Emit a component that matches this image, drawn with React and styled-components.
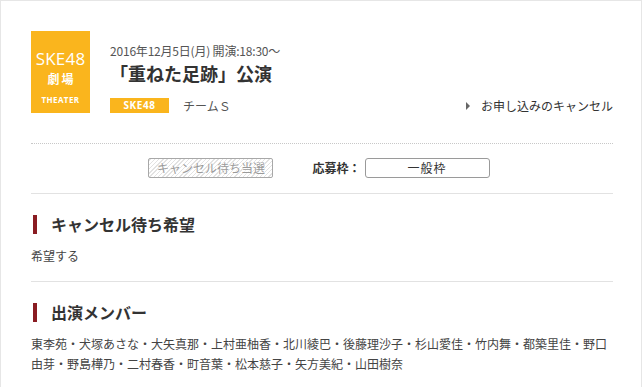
import styled, { createGlobalStyle } from 'styled-components';

const GlobalStyle = createGlobalStyle`
  html, body {
    margin: 0;
    padding: 0;
    background: #fff;
  }
  body {
    font-family: "Noto Sans CJK JP", "Noto Sans", sans-serif;
    color: #333;
  }
`;

const Card = styled.div`
  box-sizing: border-box;
  width: 642px;
  min-height: 387px;
  border: 1px solid #e6e6e6;
  border-bottom: none;
  padding: 0 28px 0 30px;
`;

const Header = styled.div`
  display: flex;
  align-items: flex-start;
  padding: 30px 0 30px;
  border-bottom: 1px dotted #c8c8c8;
`;

const Logo = styled.div`
  flex: 0 0 59px;
  height: 82px;
  background: #fab51d;
  color: #fff;
  display: flex;
  flex-direction: column;
  align-items: center;
  text-align: center;
`;

const LogoName = styled.span`
  margin-top: 19px;
  font-family: "Open Sans", sans-serif;
  font-size: 17px;
  line-height: 18px;
  letter-spacing: 0.2px;
`;

const LogoPlace = styled.span`
  margin-top: 4px;
  font-size: 12px;
  font-weight: bold;
  line-height: 14px;
  letter-spacing: 2px;
  padding-left: 2px;
`;

const LogoTheater = styled.span`
  margin-top: 9px;
  font-family: "Open Sans", sans-serif;
  font-size: 8px;
  font-weight: bold;
  line-height: 10px;
  letter-spacing: 0.4px;
`;

const Info = styled.div`
  flex: 1;
  margin-left: 20px;
  padding-top: 12px;
`;

const DateLine = styled.div`
  font-size: 12px;
  line-height: 16px;
  color: #555;
  letter-spacing: -0.2px;
`;

const Title = styled.h1`
  margin: 3px 0 0;
  font-size: 18px;
  line-height: 22px;
  font-weight: bold;
  color: #333;
`;

const MetaRow = styled.div`
  display: flex;
  align-items: center;
  margin-top: 14px;
`;

const Badge = styled.span`
  width: 59px;
  height: 15px;
  background: #fab51d;
  color: #fff;
  font-family: "Open Sans", sans-serif;
  font-size: 10px;
  font-weight: bold;
  line-height: 15px;
  text-align: center;
  letter-spacing: 0.6px;
`;

const Team = styled.span`
  margin-left: 14px;
  font-size: 12px;
  line-height: 15px;
  color: #555;
`;

const CancelLink = styled.a`
  margin-left: auto;
  display: flex;
  align-items: center;
  font-size: 12px;
  line-height: 15px;
  color: #333;
  text-decoration: none;

  &::before {
    content: '';
    width: 0;
    height: 0;
    margin-right: 11px;
    border-top: 4px solid transparent;
    border-bottom: 4px solid transparent;
    border-left: 4px solid #666;
  }
`;

const ApplyRow = styled.div`
  display: flex;
  align-items: center;
  justify-content: center;
  padding: 14px 6px 15px 0;
  border-bottom: 1px solid #e2e2e2;
`;

const WaitButton = styled.span`
  box-sizing: border-box;
  width: 125px;
  height: 20px;
  border: 1px solid #a8a8a8;
  border-radius: 2px;
  background: repeating-linear-gradient(
    -45deg,
    #fff 0,
    #fff 2px,
    #e2e2e2 2px,
    #e2e2e2 3px
  );
  color: #9a9a9a;
  font-size: 12px;
  line-height: 18px;
  text-align: center;
  text-shadow: 0 0 1px #fff, 0 0 2px #fff, 0 0 2px #fff;
`;

const FieldLabel = styled.span`
  margin: 0 4px 0 39px;
  font-size: 12px;
  font-weight: bold;
  line-height: 20px;
`;

const FieldBox = styled.span`
  box-sizing: border-box;
  width: 125px;
  height: 20px;
  border: 1px solid #9a9a9a;
  border-radius: 3px;
  font-size: 12px;
  line-height: 18px;
  text-align: center;
  letter-spacing: 1px;
`;

const Section = styled.section`
  padding: 21px 0 15px;
  border-bottom: 1px solid #e2e2e2;
`;

const Heading = styled.h2`
  margin: 0 0 0 2px;
  padding-left: 14px;
  border-left: 4px solid #8a1c22;
  font-size: 16px;
  font-weight: bold;
  line-height: 19px;
  color: #333;
`;

const Body = styled.p`
  margin: 12px 0 0;
  font-size: 12px;
  line-height: 20px;
  color: #444;
`;

const members = [
  '東李苑', '犬塚あさな', '大矢真那', '上村亜柚香', '北川綾巴', '後藤理沙子',
  '杉山愛佳', '竹内舞', '都築里佳', '野口由芽', '野島樺乃', '二村春香',
  '町音葉', '松本慈子', '矢方美紀', '山田樹奈',
];

const App = () => (
  <>
    <GlobalStyle />
    <Card>
      <Header>
        <Logo>
          <LogoName>SKE48</LogoName>
          <LogoPlace>劇場</LogoPlace>
          <LogoTheater>THEATER</LogoTheater>
        </Logo>
        <Info>
          <DateLine>2016年12月5日(月) 開演:18:30～</DateLine>
          <Title>「重ねた足跡」公演</Title>
          <MetaRow>
            <Badge>SKE48</Badge>
            <Team>チームＳ</Team>
            <CancelLink href="#">お申し込みのキャンセル</CancelLink>
          </MetaRow>
        </Info>
      </Header>
      <ApplyRow>
        <WaitButton>キャンセル待ち当選</WaitButton>
        <FieldLabel>応募枠：</FieldLabel>
        <FieldBox>一般枠</FieldBox>
      </ApplyRow>
      <Section>
        <Heading>キャンセル待ち希望</Heading>
        <Body>希望する</Body>
      </Section>
      <Section>
        <Heading>出演メンバー</Heading>
        <Body>{members.join('・')}</Body>
      </Section>
    </Card>
  </>
);

export default App;
